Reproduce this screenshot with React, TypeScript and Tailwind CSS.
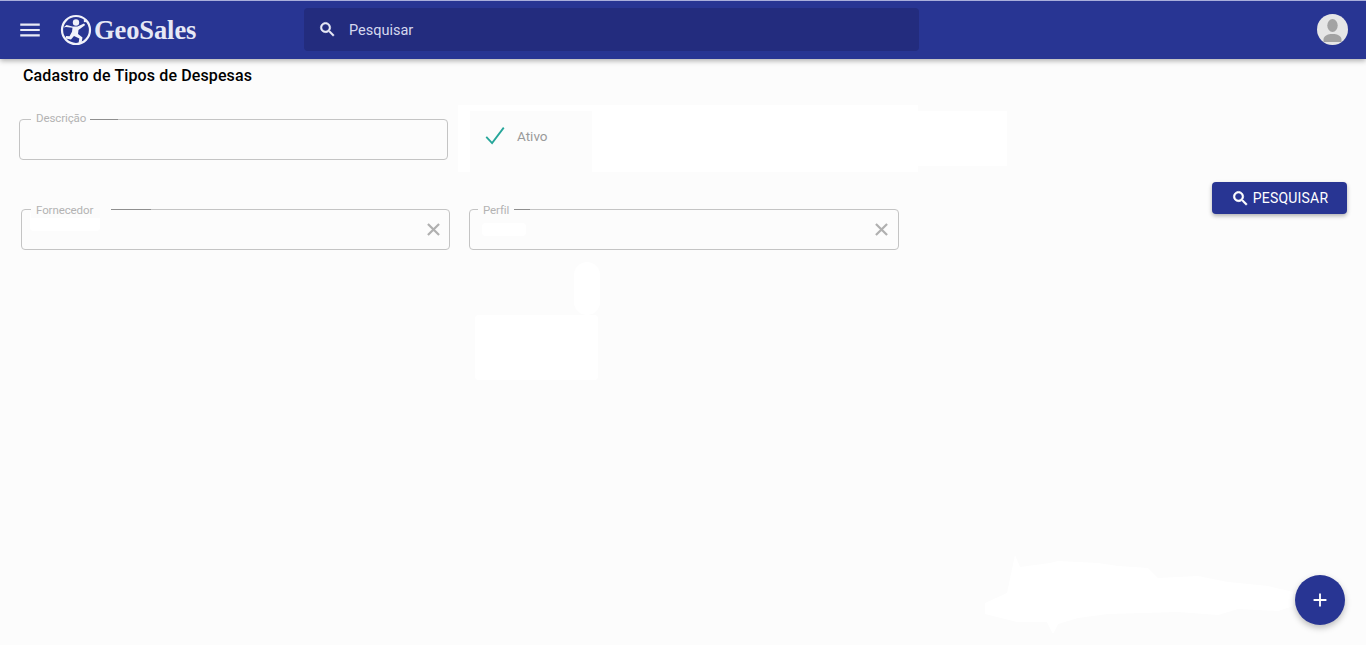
const searchPath =
  "M15.5 14h-.79l-.28-.27C15.41 12.59 16 11.11 16 9.5 16 5.91 13.09 3 9.5 3S3 5.91 3 9.5 5.91 16 9.5 16c1.61 0 3.09-.59 4.23-1.57l.27.28v.79l5 4.99L20.49 19l-4.99-5zm-6 0C7.01 14 5 11.99 5 9.5S7.01 5 9.5 5 14 7.01 14 9.5 11.99 14 9.5 14z";

function GeoLogo() {
  return (
    <svg width="32" height="32" viewBox="0 0 32 32" className="shrink-0">
      <circle cx="16" cy="16" r="14" fill="none" stroke="#f1f2fa" strokeWidth="2.2" />
      <circle cx="16" cy="8.500" r="3.200" fill="#f1f2fa" />
      <path d="M3.500 13.500l3-2.500 6 1.500 5 0 6.500-3 1.200 1.500-6.700 5-.5 4 4.500 3.500-1 5.500-3 .5.800-5-5.300-2.500-3 3.500-5.500-1 .5-2.500 3.500.2 2.500-4.500.5-4-6.500-.7z" fill="#f1f2fa" />
      <circle cx="25" cy="7" r="1.300" fill="#f1f2fa" />
    </svg>
  );
}

type FieldProps = {
  label: string;
  notch: string;
  accent: string;
  clearAt?: string;
  smudge?: string;
  className: string;
};

function Field({ label, notch, accent, clearAt, smudge, className }: FieldProps) {
  return (
    <div className={`relative h-[41px] rounded border border-[#c4c4c4] ${className}`}>
      {smudge && <div className={`absolute rounded bg-white ${smudge}`} />}
      <span className={`absolute flex h-[14px] items-center bg-[#fcfcfc] pl-[5px] text-[11.5px] tracking-[-0.1px] text-[#b3b3b3] ${notch}`}>
        {label}
      </span>
      <span className={`absolute -top-px h-px bg-[#8f8f8f] ${accent}`} />
      {clearAt && (
        <svg viewBox="0 0 14 14" className={`absolute top-[13px] h-[13px] w-[13px] fill-none stroke-[#b0b0b0] stroke-[2.4] ${clearAt}`}>
          <path d="M1 1l12 12M13 1L1 13" />
        </svg>
      )}
    </div>
  );
}

export default function App() {
  return (
    <div className="relative h-[645px] w-[1366px] overflow-hidden bg-[#fcfcfc] font-['Roboto',sans-serif]">
      {/* Header */}
      <header className="relative z-10 flex h-[59px] items-center border-t border-[#a9aedb] bg-[#283593] shadow-[0_2px_5px_rgba(0,0,0,0.3)]">
        <svg viewBox="0 0 24 24" className="ml-[17px] h-[26px] w-[26px] fill-[#e8eaf6]">
          <path d="M3 18h18v-2H3v2zm0-5h18v-2H3v2zm0-7v2h18V6H3z" />
        </svg>
        <div className="ml-[17px] flex w-[244px] items-center">
          <GeoLogo />
          <span className="ml-[2px] font-['Liberation_Serif',serif] text-[26.5px] font-bold leading-none tracking-[-0.1px] text-[#e6e8f5]">GeoSales</span>
        </div>
        <div className="-mt-px flex h-[43px] w-[615px] items-center rounded bg-[#232c7e]">
          <svg viewBox="0 0 24 24" className="ml-[14px] h-[19px] w-[19px] fill-[#e8eaf6]">
            <path d={searchPath} stroke="#e8eaf6" strokeWidth="0.7" />
          </svg>
          <span className="ml-[12px] mt-[2px] text-[14.5px] text-[#d5d8ee]">Pesquisar</span>
        </div>
        <div className="-mt-px ml-auto mr-[18px] flex h-[31px] w-[31px] items-center justify-center overflow-hidden rounded-full bg-[#e6e6e6]">
          <svg viewBox="0 0 31 31" className="h-[31px] w-[31px] fill-[#a3a3a3]">
            <ellipse cx="15.5" cy="11.5" rx="5.2" ry="6.5" />
            <path d="M6.500 28v-2.500c0-3.500 4-5.500 9-5.500s9 2 9 5.500V28z" />
          </svg>
        </div>
      </header>

      {/* Marcas brancas */}
      <div className="absolute left-[458px] top-[105px] h-[67px] w-[460px] bg-white" />
      <div className="absolute left-[918px] top-[111px] h-[55px] w-[89px] bg-white" />
      <div className="absolute left-[470px] top-[111px] h-[61px] w-[122px] bg-[#fcfcfc]" />
      <div className="absolute left-[475px] top-[315px] h-[65px] w-[123px] rounded bg-white" />
      <div className="absolute left-[574px] top-[262px] h-[53px] w-[26px] rounded-full bg-white" />
      <svg viewBox="0 0 320 80" className="absolute left-[980px] top-[553px] h-[80px] w-[320px] fill-white">
        <path d="M35 2l5 12 30-4 8-2 40 2 20 3 30 2 10 10 40-2 30 6 40 4 25 6v14l-15 5-40-2-20 6-40-3-70 2-30 4-20 6-5 10-6-12-30 0-32-8L5 50l22-10z" />
      </svg>

      <main className="relative">
        <h1 className="ml-[23px] mt-[8px] text-[16px] font-medium leading-[18px] tracking-[0.12px] text-black">
          Cadastro de Tipos de Despesas
        </h1>

        <div className="mt-[34px] flex items-center">
          <Field label="Descrição" notch="-top-[8px] left-[11px] w-[69px]" accent="left-[70px] w-[28px]" className="ml-[19px] w-[429px]" />
          <svg viewBox="0 0 24 24" className="-mt-[7px] ml-[36px] h-[20px] w-[22px] fill-none stroke-[#26a69a] stroke-[2.2]">
            <path d="M1.500 13l7 7.500L22.500 2" />
          </svg>
          <span className="-mt-[7px] ml-[11px] text-[13.5px] text-[#9a9a9a]">Ativo</span>
        </div>

        <div className="relative mt-[49px] flex">
          <Field label="Fornecedor" notch="-top-[6px] left-[9px] w-[80px]" accent="left-[89px] w-[40px]" clearAt="right-[9px]" smudge="left-[8px] top-[1px] h-[20px] w-[70px]" className="ml-[21px] w-[429px]" />
          <Field label="Perfil" notch="-top-[6px] left-[8px] w-[36px]" accent="left-[44px] w-[16px]" clearAt="right-[10px]" smudge="left-[12px] top-[13px] h-[13px] w-[44px]" className="ml-[19px] w-[430px]" />
          <button className="absolute right-[19px] -top-[27px] flex h-[32px] w-[135px] items-center justify-center rounded bg-[#283593] text-[14px] font-normal tracking-[0.2px] text-white shadow-[0_2px_4px_rgba(0,0,0,0.3)]">
            <svg viewBox="0 0 24 24" className="mr-[3px] h-[19px] w-[19px] fill-white">
              <path d={searchPath} stroke="#ffffff" strokeWidth="0.8" />
            </svg>
            PESQUISAR
          </button>
        </div>
      </main>

      {/* FAB */}
      <button className="absolute left-[1295px] top-[575px] flex h-[50px] w-[50px] items-center justify-center rounded-full bg-[#283593] shadow-[0_3px_6px_rgba(0,0,0,0.25)]">
        <svg viewBox="0 0 24 24" className="h-[22px] w-[22px] fill-white">
          <path d="M19 13h-6v6h-2v-6H5v-2h6V5h2v6h6v2z" />
        </svg>
      </button>
    </div>
  );
}
